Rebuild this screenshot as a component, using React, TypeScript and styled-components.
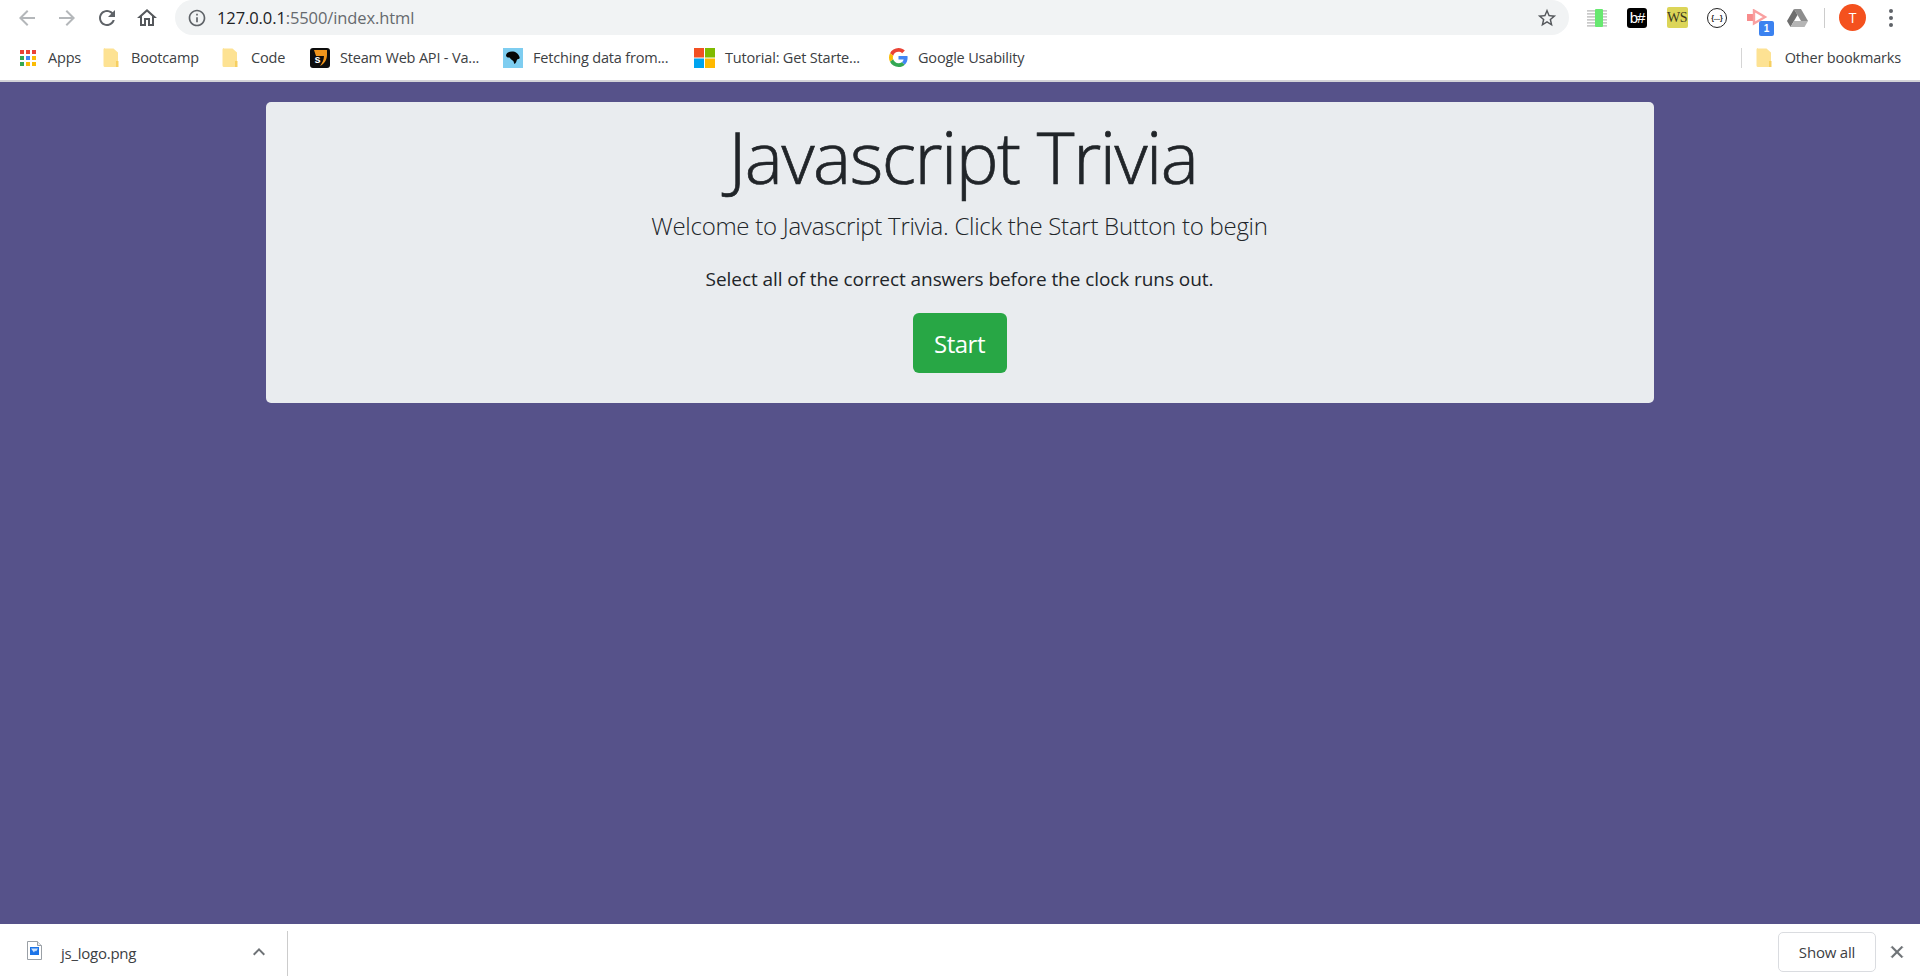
import React from "react";
import styled, { createGlobalStyle } from "styled-components";

const Global = createGlobalStyle`
  html, body { margin: 0; padding: 0; height: 100%; overflow: hidden; }
  #root { height: 100%; }
`;

const UI = `"Open Sans", "Noto Sans", "Liberation Sans", sans-serif`;

const Shell = styled.div`
  height: 979px;
  display: flex;
  flex-direction: column;
  font-family: ${UI};
  background: #fff;
`;

const Toolbar = styled.header`
  height: 35px;
  flex: none;
  display: flex;
  align-items: center;
  padding-left: 15px;
`;

const NavIcon = styled.span<{ $w?: number }>`
  flex: none;
  width: ${(p) => p.$w ?? 40}px;
  height: 24px;
  display: flex;
  align-items: center;
  justify-content: center;
  svg { display: block; }
`;

const NavGroup = styled.div`
  display: flex;
  width: 160px;
  flex: none;
`;

const Omnibox = styled.div`
  width: 1394px;
  height: 35px;
  flex: none;
  background: #f1f3f4;
  border-radius: 18px;
  display: flex;
  align-items: center;
  padding: 0 11px 0 12px;
  box-sizing: border-box;
`;

const Url = styled.div`
  margin-left: 10px;
  font-size: 16.5px;
  letter-spacing: -0.1px;
  color: #666a6e;
  flex: 1;
  white-space: nowrap;
  b { font-weight: 400; color: #202124; }
`;

const Extensions = styled.div`
  display: flex;
  align-items: center;
  margin-left: 8px;
  flex: none;
`;

const Ext = styled.span`
  position: relative;
  width: 40px;
  height: 24px;
  flex: none;
  display: flex;
  align-items: center;
  justify-content: center;
`;

const Sharp = styled.span`
  width: 20px;
  height: 20px;
  border-radius: 3px;
  background: #000;
  color: #fff;
  font: 400 15px/20px "Liberation Sans", sans-serif;
  text-align: center;
  letter-spacing: -1px;
  overflow: hidden;
`;

const WS = styled.span`
  width: 21px;
  height: 21px;
  border-radius: 2px;
  background: #dcd558;
  color: #3c3a1e;
  font: 400 14px/21px "Liberation Serif", serif;
  text-align: center;
  letter-spacing: -0.6px;
`;

const Ring = styled.span`
  width: 18px;
  height: 18px;
  border: 1.5px solid #222;
  border-radius: 50%;
  color: #222;
  font: 700 7px/18px "Liberation Sans", sans-serif;
  text-align: center;
`;

const Badge = styled.span`
  position: absolute;
  right: 3px;
  bottom: -6px;
  width: 15px;
  height: 15px;
  border-radius: 2px;
  background: #3b82f0;
  color: #fff;
  font: 700 10px/15px "Liberation Sans", sans-serif;
  text-align: center;
`;

const Divider = styled.span`
  width: 1px;
  height: 20px;
  background: #ccc;
  flex: none;
  margin: 0 14px 0 7px;
`;

const Avatar = styled.span`
  width: 27px;
  height: 27px;
  border-radius: 50%;
  background: #f4511e;
  color: #fff;
  font: 400 14px/27px ${UI};
  text-align: center;
  flex: none;
`;

const Dots = styled.span`
  margin-left: 23px;
  width: 4px;
  height: 18px;
  flex: none;
  display: flex;
  flex-direction: column;
  justify-content: space-between;
  i { display: block; width: 4px; height: 4px; border-radius: 50%; background: #5f6368; }
`;

const Bookmarks = styled.nav`
  height: 45px;
  flex: none;
  display: flex;
  align-items: center;
  padding: 0 19px 0 20px;
  box-sizing: border-box;
`;

const Mark = styled.span<{ $w: number }>`
  width: ${(p) => p.$w}px;
  flex: none;
  display: flex;
  align-items: center;
  white-space: nowrap;
`;

const MarkIcon = styled.span<{ $gap: number }>`
  flex: none;
  display: flex;
  margin-right: ${(p) => p.$gap}px;
`;

const MarkText = styled.span`
  font-size: 14.5px;
  letter-spacing: -0.18px;
  color: #3c4043;
`;

const Spacer = styled.span`
  flex: 1;
`;

const BarRule = styled.span`
  width: 1px;
  height: 20px;
  background: #d5d5d5;
  margin-right: 14px;
  flex: none;
`;

const SteamIcon = styled.span`
  width: 20px;
  height: 20px;
  border-radius: 3px;
  background: #0d0d0d;
  position: relative;
  display: flex;
  align-items: center;
  justify-content: center;
  color: #fff;
  font: 700 11px/20px "Liberation Sans", sans-serif;
  overflow: hidden;
`;

const SteamArc = styled.svg`
  position: absolute;
  inset: 0;
`;

const SteamLetter = styled.span`
  position: relative;
  margin-left: -5px;
  margin-top: 2px;
`;

const Rule = styled.div`
  height: 2px;
  flex: none;
  background: #d3d3d8;
`;

const Page = styled.main`
  flex: 1;
  background: #56528a;
  display: flex;
  flex-direction: column;
  align-items: center;
  padding-top: 20px;
`;

const Jumbotron = styled.section`
  width: 1388px;
  margin-left: -1px;
  height: 301px;
  box-sizing: border-box;
  background: #e9ecef;
  border-radius: 5px;
  display: flex;
  flex-direction: column;
  align-items: center;
  color: #212529;
`;

const Title = styled.h1`
  margin: 4px 0 0 7px;
  font-size: 72px;
  line-height: 100px;
  font-weight: 300;
  letter-spacing: -1.5px;
  -webkit-text-stroke: 0.7px #212529;
`;

const Lead = styled.p`
  margin: 2px 0 0;
  font-size: 24px;
  line-height: 36px;
  font-weight: 300;
  letter-spacing: -0.27px;
`;

const Note = styled.p`
  margin: 20px 0 0;
  font-size: 19px;
  line-height: 30px;
  font-weight: 400;
  letter-spacing: -0.07px;
`;

const StartButton = styled.button`
  margin-top: 19px;
  width: 94px;
  height: 60px;
  border: 0;
  border-radius: 6px;
  background: #28a745;
  color: #fff;
  font-family: ${UI};
  font-size: 24px;
  letter-spacing: -0.5px;
  padding: 0;
`;

const DownloadBar = styled.footer`
  height: 55px;
  flex: none;
  display: flex;
  align-items: center;
  background: #fff;
`;

const FileIconWrap = styled.span`
  display: flex;
  margin-left: 27px;
  flex: none;
  margin-top: -3px;
`;

const FileName = styled.span`
  margin-left: 19px;
  width: 186px;
  flex: none;
  font-size: 15px;
  letter-spacing: -0.25px;
  color: #3c4043;
  padding-top: 2px;
`;

const Caret = styled.span`
  display: flex;
  flex: none;
  width: 24px;
`;

const DownloadRule = styled.span`
  width: 1px;
  height: 45px;
  background: #ccc;
  flex: none;
  margin-left: 16px;
  margin-top: 3px;
`;

const ShowAll = styled.button`
  margin-left: auto;
  width: 98px;
  height: 40px;
  box-sizing: border-box;
  border: 1px solid #dadce0;
  border-radius: 5px;
  background: #fff;
  color: #3c4043;
  font-family: ${UI};
  font-size: 15px;
  letter-spacing: -0.2px;
  padding: 0;
`;

const CloseBox = styled.span`
  display: flex;
  flex: none;
  margin: 0 13px 0 11px;
  svg path { stroke: #6e7276; stroke-width: 0.9; }
`;

const Glyph = ({ d, size = 24, fill = "#5f6368" }: { d: string; size?: number; fill?: string }) => (
  <svg width={size} height={size} viewBox="0 0 24 24" fill={fill}>
    <path d={d} />
  </svg>
);

const BACK = "M20 11H7.83l5.59-5.59L12 4l-8 8 8 8 1.41-1.41L7.83 13H20v-2z";
const FORWARD = "M12 4l-1.41 1.41L16.17 11H4v2h12.17l-5.58 5.59L12 20l8-8z";
const RELOAD = "M17.65 6.35C16.2 4.9 14.21 4 12 4c-4.42 0-7.99 3.58-7.99 8s3.57 8 7.99 8c3.73 0 6.84-2.55 7.73-6h-2.08c-.82 2.33-3.04 4-5.65 4-3.31 0-6-2.69-6-6s2.69-6 6-6c1.66 0 3.14.69 4.22 1.78L13 11h7V4l-2.35 2.35z";
const HOME = "M12 5.69l5 4.5V18h-2v-6H9v6H7v-7.81l5-4.5M12 3L2 12h3v8h6v-6h2v6h6v-8h3L12 3z";
const INFO = "M11 7h2v2h-2zm0 4h2v6h-2zm1-9C6.48 2 2 6.48 2 12s4.48 10 10 10 10-4.48 10-10S17.52 2 12 2zm0 18c-4.41 0-8-3.59-8-8s3.59-8 8-8 8 3.59 8 8-3.59 8-8 8z";
const STAR = "M22 9.24l-7.19-.62L12 2 9.19 8.63 2 9.24l5.46 4.73L5.82 21 12 17.27 18.18 21l-1.63-7.03L22 9.24zM12 15.4l-3.76 2.27 1-4.28-3.32-2.88 4.38-.38L12 6.1l1.71 4.04 4.38.38-3.32 2.88 1 4.28L12 15.4z";
const CLOSE = "M19 6.41L17.59 5 12 10.59 6.41 5 5 6.41 10.59 12 5 17.59 6.41 19 12 13.41 17.59 19 19 17.59 13.41 12z";
const CHEVRON = "M7.41 15.41L12 10.83l4.59 4.58L18 14l-6-6-6 6z";

const AppsGrid = () => {
  const colors = ["#ea4335", "#ea4335", "#ea4335", "#34a853", "#4285f4", "#fbbc05", "#34a853", "#fbbc05", "#fbbc05"];
  return (
    <svg width="16" height="16" viewBox="0 0 16 16">
      {colors.map((c, i) => (
        <rect key={i} x={(i % 3) * 6} y={Math.floor(i / 3) * 6} width="4" height="4" fill={c} />
      ))}
    </svg>
  );
};

const Folder = () => (
  <svg width="16" height="20" viewBox="0 0 16 20">
    <path d="M2 0.5h8.5l4.5 4v13a1.5 1.5 0 0 1-1.5 1.5h-11.5a1.5 1.5 0 0 1-1.5-1.5v-16a1.5 1.5 0 0 1 1.5-1.5z" fill="#fde293" />
    <path d="M13 13h2.5v6h-2.5z" fill="#f6cf60" />
  </svg>
);

const FetchIcon = () => (
  <svg width="20" height="20" viewBox="0 0 20 20">
    <rect width="20" height="20" fill="#7ecdf0" />
    <path d="M3 7.5C3 5 6 3.5 9 3.5c3.5 0 6.5 2 7.5 5.5.3 1 .2 2-1 2-1 0-1.5.5-2 2-.3 1.2-1 2.4-2 3-.6-1-.6-2.2-1.2-3C9 12 7.5 11 6.5 9.5 5 9.8 3 9 3 7.5z" fill="#050505" />
  </svg>
);

const WindowsIcon = () => (
  <svg width="21" height="20" viewBox="0 0 21 20">
    <rect width="10" height="9.5" fill="#f25022" />
    <rect x="11" width="10" height="9.5" fill="#7fba00" />
    <rect y="10.5" width="10" height="9.5" fill="#00a4ef" />
    <rect x="11" y="10.5" width="10" height="9.5" fill="#ffb900" />
  </svg>
);

const GoogleIcon = () => (
  <svg width="19" height="19" viewBox="0 0 48 48">
    <path fill="#EA4335" d="M24 9.5c3.54 0 6.71 1.22 9.21 3.6l6.85-6.85C35.9 2.38 30.47 0 24 0 14.62 0 6.51 5.38 2.56 13.22l7.98 6.19C12.43 13.72 17.74 9.5 24 9.5z" />
    <path fill="#4285F4" d="M46.98 24.55c0-1.57-.15-3.09-.38-4.55H24v9.02h12.94c-.58 2.96-2.26 5.48-4.78 7.18l7.73 6c4.51-4.18 7.09-10.36 7.09-17.65z" />
    <path fill="#FBBC05" d="M10.53 28.59c-.48-1.45-.76-2.99-.76-4.59s.27-3.14.76-4.59l-7.98-6.19C.92 16.46 0 20.12 0 24c0 3.88.92 7.54 2.56 10.78l7.97-6.19z" />
    <path fill="#34A853" d="M24 48c6.48 0 11.93-2.13 15.89-5.81l-7.73-6c-2.15 1.45-4.92 2.3-8.16 2.3-6.26 0-11.57-4.22-13.47-9.91l-7.98 6.19C6.51 42.62 14.62 48 24 48z" />
  </svg>
);

const SheetIcon = () => (
  <svg width="20" height="18" viewBox="0 0 20 18">
    <g fill="#c9c9c9">
      {[1, 4, 7, 10, 13, 16].map((y) => (
        <rect key={y} x="0" y={y} width="20" height="1.7" />
      ))}
    </g>
    <rect x="8" y="0" width="8" height="18" rx="1" fill="#67e870" />
  </svg>
);

const TagIcon = () => (
  <svg width="21" height="18" viewBox="0 0 21 18">
    <rect x="0" y="5" width="7" height="7" fill="#f88c8c" />
    <path fill="none" stroke="#f9a0a0" strokeWidth="2.4" d="M7 1.5l11 6.5-11 6.5z" />
  </svg>
);

const DriveIcon = () => (
  <svg width="21" height="18" viewBox="0 0 21 18">
    <path d="M7 0h7l7 12h-7z" fill="#8d8d8d" />
    <path d="M7 0l3.5 6L3.5 18 0 12z" fill="#6e6e6e" />
    <path d="M3.5 18l3.5-6h14l-3.5 6z" fill="#b5b5b5" />
  </svg>
);

const FileIcon = () => (
  <svg width="15" height="19" viewBox="0 0 15 19">
    <path d="M0.5 0.5h10l4 4v14h-14z" fill="#fff" stroke="#9aa0a6" />
    <path d="M10.5 0.5v4h4" fill="#e8eaed" stroke="#9aa0a6" />
    <rect x="3" y="6" width="9" height="8" fill="#1a73e8" />
    <path d="M4 7.5h7l-2 3-1-1-1 2z" fill="#cfe3fb" />
  </svg>
);

const marks = [
  { w: 83, gap: 12, icon: <AppsGrid />, label: "Apps" },
  { w: 119, gap: 12, icon: <Folder />, label: "Bootcamp" },
  { w: 88, gap: 13, icon: <Folder />, label: "Code" },
  { w: 193, gap: 10, icon: <SteamIcon><SteamArc width="20" height="20" viewBox="0 0 20 20"><path d="M4 2h13v5c0 5-3 9-7 11 2-3 4-6 4-10H6z" fill="#f0951c" /></SteamArc><SteamLetter>s</SteamLetter></SteamIcon>, label: "Steam Web API - Va..." },
  { w: 191, gap: 10, icon: <FetchIcon />, label: "Fetching data from..." },
  { w: 195, gap: 10, icon: <WindowsIcon />, label: "Tutorial: Get Starte..." },
  { w: 140, gap: 10, icon: <GoogleIcon />, label: "Google Usability" },
];

export default function App() {
  return (
    <Shell>
      <Global />
      <Toolbar>
        <NavGroup>
          <NavIcon $w={24}><Glyph d={BACK} fill="#b4b7ba" /></NavIcon>
          <NavIcon $w={16} />
          <NavIcon $w={24}><Glyph d={FORWARD} fill="#b4b7ba" /></NavIcon>
          <NavIcon $w={16} />
          <NavIcon $w={24}><Glyph d={RELOAD} /></NavIcon>
          <NavIcon $w={16} />
          <NavIcon $w={24}><Glyph d={HOME} fill="#55585c" /></NavIcon>
        </NavGroup>
        <Omnibox>
          <Glyph d={INFO} size={20} />
          <Url><b>127.0.0.1</b>:5500/index.html</Url>
          <Glyph d={STAR} size={22} fill="#55585c" />
        </Omnibox>
        <Extensions>
          <Ext><SheetIcon /></Ext>
          <Ext><Sharp>b#</Sharp></Ext>
          <Ext><WS>WS</WS></Ext>
          <Ext><Ring>{"{...}"}</Ring></Ext>
          <Ext><TagIcon /><Badge>1</Badge></Ext>
          <Ext><DriveIcon /></Ext>
          <Divider />
          <Avatar>T</Avatar>
          <Dots><i /><i /><i /></Dots>
        </Extensions>
      </Toolbar>
      <Bookmarks>
        {marks.map((m) => (
          <Mark key={m.label} $w={m.w}>
            <MarkIcon $gap={m.gap}>{m.icon}</MarkIcon>
            <MarkText>{m.label}</MarkText>
          </Mark>
        ))}
        <Spacer />
        <BarRule />
        <MarkIcon $gap={13}><Folder /></MarkIcon>
        <MarkText>Other bookmarks</MarkText>
      </Bookmarks>
      <Rule />
      <Page>
        <Jumbotron>
          <Title>Javascript Trivia</Title>
          <Lead>Welcome to Javascript Trivia. Click the Start Button to begin</Lead>
          <Note>Select all of the correct answers before the clock runs out.</Note>
          <StartButton>Start</StartButton>
        </Jumbotron>
      </Page>
      <DownloadBar>
        <FileIconWrap><FileIcon /></FileIconWrap>
        <FileName>js_logo.png</FileName>
        <Caret><Glyph d={CHEVRON} fill="#6e7276" /></Caret>
        <DownloadRule />
        <ShowAll>Show all</ShowAll>
        <CloseBox><Glyph d={CLOSE} size={20} fill="#6e7276" /></CloseBox>
      </DownloadBar>
    </Shell>
  );
}
